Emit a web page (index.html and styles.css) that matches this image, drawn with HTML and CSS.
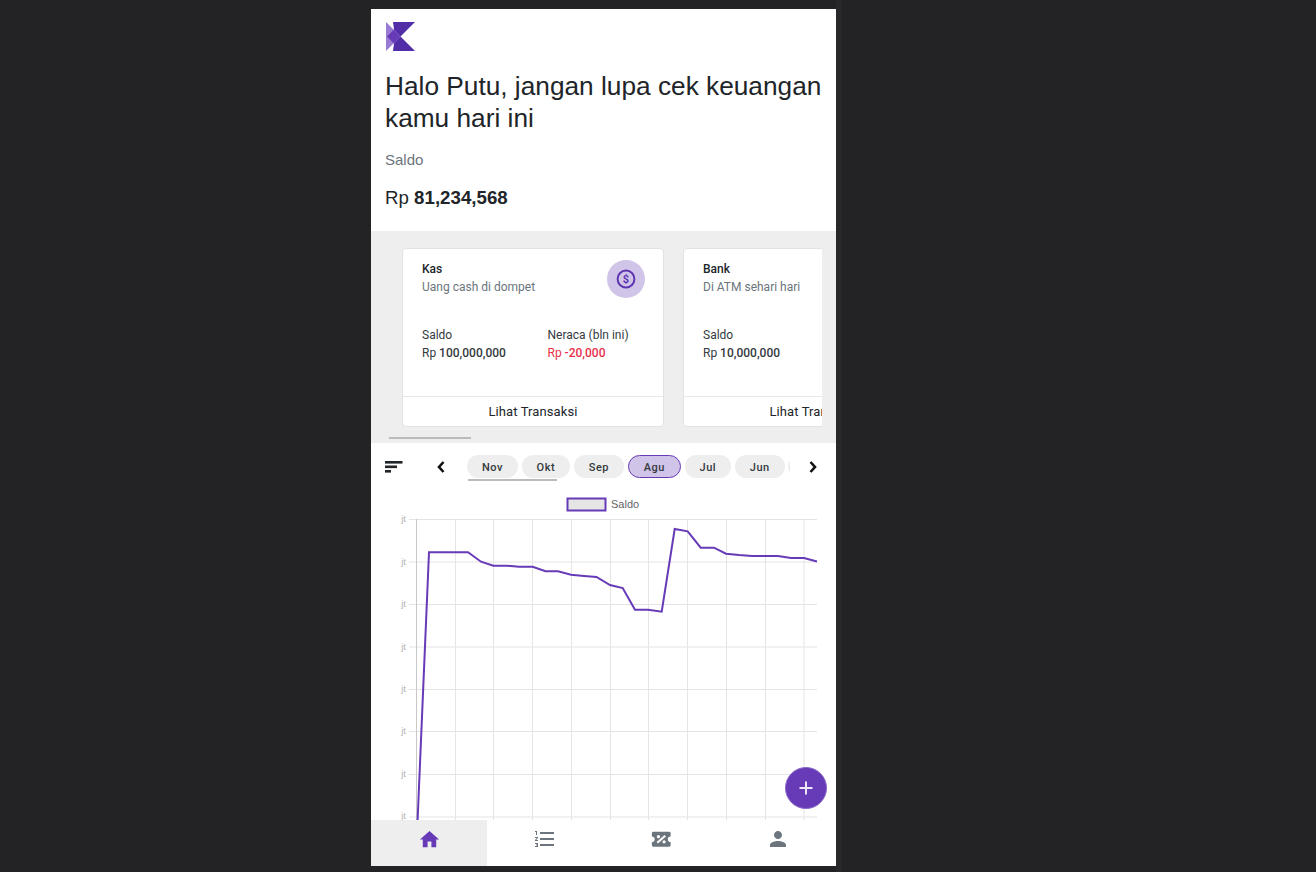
FILE: index.html
```html
<!DOCTYPE html>
<html lang="en">
<head>
    <meta charset="UTF-8">
    <meta name="viewport" content="width=device-width, initial-scale=1.0">
    <title>Keuangan</title>
    <link rel="stylesheet" href="styles.css">
</head>
<body>
    <div class="phone">
        <div class="screen">
            <header class="top">
                <svg class="logo" width="29" height="29" viewBox="0 0 29 29">
                    <polygon points="0,0 14.5,14.500 0,29" fill="#9a7bd4"/>
                    <polygon points="7,0 29,0 14.500,14.500 8,7.500" fill="#512da8"/>
                    <polygon points="8,7.500 14.500,14.500 8,21.500 1,14.500" fill="#673ab7"/>
                    <polygon points="14.500,14.500 29,29 7,29 8,21.500" fill="#512da8"/>
                </svg>
                <h3 class="greeting">Halo Putu, jangan lupa cek keuangan kamu hari ini</h3>
                <div class="balance-label">Saldo</div>
                <div class="balance">Rp <b>81,234,568</b></div>
            </header>

            <section class="wallets">
                <div class="wallet-scroll">
                    <div class="card">
                        <div class="card-body">
                            <div class="card-head">
                                <div>
                                    <div class="card-name">Kas</div>
                                    <div class="card-desc">Uang cash di dompet</div>
                                </div>
                                <div class="card-icon">
                                    <svg width="20" height="20" viewBox="0 0 20 20">
                                        <circle cx="10" cy="10" r="8.400" fill="none" stroke="#5e35b1" stroke-width="2"/>
                                        <text x="10" y="14" text-anchor="middle" class="dollar">$</text>
                                    </svg>
                                </div>
                            </div>
                            <div class="card-stats">
                                <div class="stat">
                                    <div>Saldo</div>
                                    <div>Rp <b>100,000,000</b></div>
                                </div>
                                <div class="stat">
                                    <div>Neraca (bln ini)</div>
                                    <div class="minus">Rp <b>-20,000</b></div>
                                </div>
                            </div>
                        </div>
                        <div class="card-foot">Lihat Transaksi</div>
                    </div>
                    <div class="card">
                        <div class="card-body">
                            <div class="card-head">
                                <div>
                                    <div class="card-name">Bank</div>
                                    <div class="card-desc">Di ATM sehari hari</div>
                                </div>
                            </div>
                            <div class="card-stats">
                                <div class="stat">
                                    <div>Saldo</div>
                                    <div>Rp <b>10,000,000</b></div>
                                </div>
                            </div>
                        </div>
                        <div class="card-foot">Lihat Transaksi</div>
                    </div>
                </div>
                <div class="wallet-thumb"></div>
            </section>

            <section class="months">
                <svg class="sort" width="18" height="12" viewBox="0 0 18 12">
                    <rect x="0" y="0" width="17.500" height="2.600"/>
                    <rect x="0" y="4.500" width="12" height="2.600"/>
                    <rect x="0" y="9" width="6" height="2.600"/>
                </svg>
                <svg class="chev-left" width="8" height="14" viewBox="0 0 8 14">
                    <polyline points="6.500,2 2,7 6.500,12" fill="none" stroke="#111" stroke-width="2.600"/>
                </svg>
                <div class="month-scroll">
                    <div class="month-list">
                        <span class="pill">Nov</span>
                        <span class="pill">Okt</span>
                        <span class="pill">Sep</span>
                        <span class="pill active">Agu</span>
                        <span class="pill">Jul</span>
                        <span class="pill">Jun</span>
                        <span class="pill">Mei</span>
                    </div>
                    <div class="month-thumb"></div>
                </div>
                <svg class="chev-right" width="8" height="14" viewBox="0 0 8 14">
                    <polyline points="1.500,2 6,7 1.500,12" fill="none" stroke="#111" stroke-width="2.600"/>
                </svg>
            </section>

            <svg class="chart" width="465" height="339" viewBox="371 481 465 339">
                <rect x="567.500" y="498.500" width="38" height="12" fill="#e5e5e5" stroke="#673ab7" stroke-width="2"/>
                <text x="611" y="508" class="legend">Saldo</text>
                <g class="grid">
                    <line x1="409" x2="817" y1="519.500" y2="519.500"/>
                    <line x1="409" x2="817" y1="562" y2="562"/>
                    <line x1="409" x2="817" y1="604.500" y2="604.500"/>
                    <line x1="409" x2="817" y1="647" y2="647"/>
                    <line x1="409" x2="817" y1="689.500" y2="689.500"/>
                    <line x1="409" x2="817" y1="731.500" y2="731.500"/>
                    <line x1="409" x2="817" y1="774.500" y2="774.500"/>
                    <line x1="409" x2="817" y1="817" y2="817"/>
                    <line x1="455.500" x2="455.500" y1="519" y2="820"/>
                    <line x1="493.500" x2="493.500" y1="519" y2="820"/>
                    <line x1="532.500" x2="532.500" y1="519" y2="820"/>
                    <line x1="571.500" x2="571.500" y1="519" y2="820"/>
                    <line x1="610.500" x2="610.500" y1="519" y2="820"/>
                    <line x1="648.500" x2="648.500" y1="519" y2="820"/>
                    <line x1="687.500" x2="687.500" y1="519" y2="820"/>
                    <line x1="726.500" x2="726.500" y1="519" y2="820"/>
                    <line x1="765.500" x2="765.500" y1="519" y2="820"/>
                    <line x1="804" x2="804" y1="519" y2="820"/>
                </g>
                <line x1="416.500" x2="416.500" y1="519" y2="820" stroke="#c8c8c8"/>
                <g class="ticks">
                    <text x="406" y="522">jt</text>
                    <text x="406" y="565">jt</text>
                    <text x="406" y="607">jt</text>
                    <text x="406" y="650">jt</text>
                    <text x="406" y="692">jt</text>
                    <text x="406" y="734">jt</text>
                    <text x="406" y="777">jt</text>
                    <text x="406" y="819">jt</text>
                </g>
                <polyline class="line" points="417.600,820 429,552.300 468,552.300 481,561.700 493.300,565.700 507,565.700 519,566.700 532.700,566.700 545.500,571.300 558,571.300 571,574.700 584,576 596.500,577 610,585 622.700,588 635,609.700 648,609.700 661.700,611.700 674.700,529 687.700,531.300 700.700,547.700 714,547.700 726,553.700 739,555 752,556 765,556 778,556 791,558 804,558 817,561.500"/>
            </svg>

            <nav class="tabs">
                <a class="tab current">
                    <svg width="23" height="23" viewBox="0 0 24 24"><path fill="#673ab7" d="M10 20v-6h4v6h5v-8h3L12 3 2 12h3v8z"/></svg>
                </a>
                <a class="tab">
                    <svg width="24" height="24" viewBox="0 0 24 24"><path fill="#6c757d" d="M2 17h2v.5H3v1h1v.5H2v1h3v-4H2zm1-9h1V4H2v1h1v3zm-1 3h1.800L2 13.100v.9h3v-1H3.200L5 10.900V10H2v1zm5-6v2h14V5H7zm0 14h14v-2H7v2zm0-6h14v-2H7v2z"/></svg>
                </a>
                <a class="tab">
                    <svg width="22.500" height="22.500" viewBox="0 0 24 24"><path fill="#6c757d" fill-rule="evenodd" d="M3.500 4h17A1.500 1.500 0 0 1 22 5.500V9a3 3 0 0 0 0 6v3.500a1.500 1.500 0 0 1-1.500 1.500h-17A1.500 1.500 0 0 1 2 18.500V15a3 3 0 0 0 0-6V5.500A1.500 1.500 0 0 1 3.500 4zM15.500 7.500L7 15l1.500 1.500L17 9zM9 7.500a1.750 1.750 0 1 0 0 3.500a1.750 1.750 0 0 0 0-3.500zM15 13a1.750 1.750 0 1 0 0 3.500a1.750 1.750 0 0 0 0-3.500z"/></svg>
                </a>
                <a class="tab">
                    <svg width="24" height="24" viewBox="0 0 24 24"><path fill="#6c757d" d="M12 12c2.210 0 4-1.790 4-4s-1.790-4-4-4-4 1.790-4 4 1.790 4 4 4zm0 2c-2.670 0-8 1.340-8 4v2h16v-2c0-2.660-5.330-4-8-4z"/></svg>
                </a>
            </nav>

            <button class="fab">
                <svg width="16" height="16" viewBox="0 0 16 16"><path d="M7 1.500h2V7h5.500v2H9v5.500H7V9H1.500V7H7z" fill="#ede7f6"/></svg>
            </button>
        </div>
        <div class="phone-edge"></div>
    </div>
</body>
</html>
```

FILE: styles.css
```css
html, body { margin: 0; height: 100%; overflow: hidden; }
body { background: #232325; font-family: Roboto, "Liberation Sans", sans-serif; color: #212529; }

.phone { display: flex; margin-left: 371px; padding-top: 9px; width: 471px; }
.phone-edge { width: 6px; height: 872px; margin-top: -9px; background: #28282b; }
.screen { position: relative; width: 465px; height: 857px; background: #fff; display: flex; flex-direction: column; overflow: hidden; }

/* header */
.top { height: 222px; padding: 13px 14px 0; box-sizing: border-box; font-family: "Liberation Sans", Arial, sans-serif; }
.logo { display: block; margin-left: 1px; }
.greeting { margin: 19px 0 0; font-size: 26.250px; font-weight: 400; line-height: 32px; }
.balance-label { margin-top: 16px; font-size: 15px; line-height: 20px; color: #6c757d; }
.balance { margin-top: 16px; font-size: 18.720px; line-height: 24px; }

/* wallet cards */
.wallets { height: 212px; background: #eee; padding-top: 17px; box-sizing: border-box; }
.wallet-scroll { display: flex; gap: 19px; width: 451px; padding-left: 31px; box-sizing: border-box; overflow: hidden; }
.card { flex: 0 0 262px; width: 262px; height: 179px; background: #fff; border: 1px solid #e2e2e2; border-radius: 4px; box-sizing: border-box; display: flex; flex-direction: column; }
.card-body { flex: 1; padding: 11px 19px 0; }
.card-head { display: flex; justify-content: space-between; height: 66px; }
.card-name { font-size: 12px; font-weight: 500; line-height: 18px; }
.card-desc { font-size: 12px; line-height: 18px; color: #6c757d; }
.card-icon { width: 38px; height: 38px; margin-right: -1px; border-radius: 50%; background: #d1c4e9; display: flex; align-items: center; justify-content: center; }
.dollar { font-size: 11px; font-weight: 700; fill: #5e35b1; }
.card-stats { display: flex; font-size: 12px; line-height: 18px; color: #343a40; }
.stat { flex: none; width: 125.500px; }
.stat + .stat { width: 96px; }
.stat b { font-weight: 500; }
.minus { color: #e8304a; }
.card-foot { height: 30px; line-height: 29px; border-top: 1px solid #e8e8e8; box-sizing: border-box; text-align: center; font-size: 13px; letter-spacing: .1px; white-space: nowrap; overflow: hidden; }
.wallet-thumb { width: 82px; height: 2px; margin: 10px 0 0 18px; background: #bbb; }

/* month selector */
.months { height: 38px; padding: 12px 0 0 14px; display: flex; align-items: flex-start; box-sizing: border-box; position: relative; }
.sort { margin-top: 6px; fill: #212529; flex: none; }
.chev-left { margin: 5px 0 0 34px; flex: none; }
.month-scroll { width: 323px; margin-left: 22px; overflow: hidden; flex: none; }
.month-list { display: flex; gap: 3.700px; height: 23px; }
.pill { flex: none; height: 23px; line-height: 25px; padding: 0 15px; border-radius: 12px; background: #eee; font-size: 11px; font-weight: 500; letter-spacing: .5px; box-sizing: border-box; color: #343a40; }
.pill.active { background: #d1c4e9; border: 1px solid #673ab7; line-height: 23px; padding: 0 15px; }
.month-thumb { width: 89px; height: 2px; margin: 1px 0 0 1px; background: #bbb; }
.chev-right { margin: 5px 0 0 19px; flex: none; }

/* chart */
.chart { display: block; flex: none; }
.legend { font-family: "Liberation Sans", Arial, sans-serif; font-size: 11px; fill: #666; }
.grid line { stroke: #e4e4e4; stroke-width: 1; }
.ticks text { font-family: "Liberation Sans", Arial, sans-serif; font-size: 9.500px; fill: #b5b5b5; text-anchor: end; }
.line { fill: none; stroke: #673ab7; stroke-width: 2; }

/* bottom nav */
.tabs { display: flex; height: 46px; background: #fff; flex: none; }
.tab { flex: 1; display: flex; align-items: center; justify-content: center; padding-bottom: 8px; box-sizing: border-box; }
.tab.current { background: #eee; }

.fab { position: absolute; right: 9px; bottom: 57px; width: 42px; height: 42px; padding: 0; border: 1px solid #8a68c8; border-radius: 50%; background: #673ab7; display: flex; align-items: center; justify-content: center; }
```
